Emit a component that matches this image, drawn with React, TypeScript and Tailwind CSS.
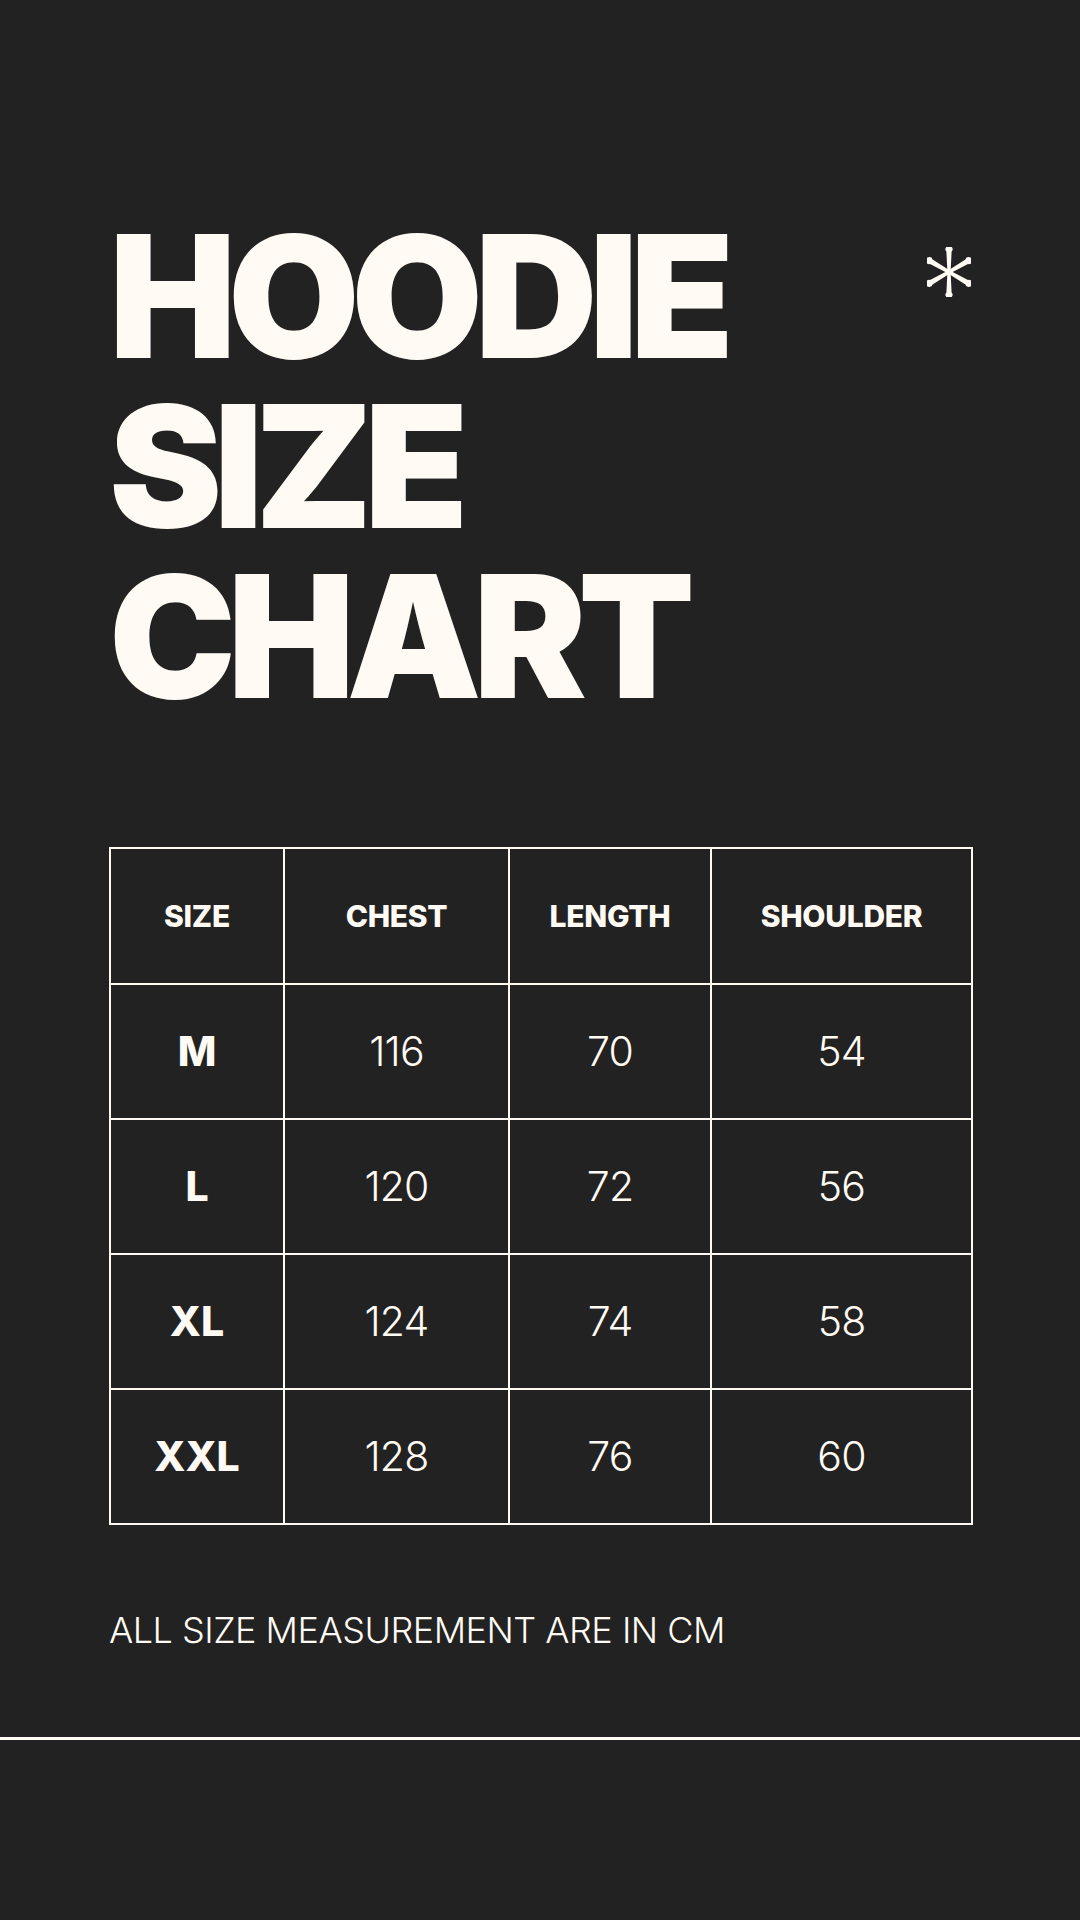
import React from "react";

const rows = [
  ["M", "116", "70", "54"],
  ["L", "120", "72", "56"],
  ["XL", "124", "74", "58"],
  ["XXL", "128", "76", "60"],
];

function Asterisk() {
  const angles = [0, 60, 120, 180, 240, 300];
  return (
    <svg width="44" height="50" viewBox="-22 -25 44 50" className="mt-[36px] shrink-0">
      {angles.map((a) => (
        <path
          key={a}
          transform={`rotate(${a})`}
          d="M -1.6 0 L -2.6 -20.4 A 3.5 3.5 0 1 1 2.6 -20.4 L 1.6 0 Z"
          fill="#fffaf3"
        />
      ))}
      <circle cx="0" cy="0" r="2.6" fill="#fffaf3" />
    </svg>
  );
}

export default function App() {
  return (
    <div className="w-[1080px] h-[1920px] bg-[#222222] text-[#fffaf3] font-['Inter',sans-serif] flex flex-col overflow-hidden">
      <div className="px-[109px] pt-[211px] flex justify-between items-start">
        <h1 className="text-[170px] leading-[170px] font-black tracking-[-0.05em]">
          <div>HOODIE</div>
          <div>SIZE</div>
          <div>CHART</div>
        </h1>
        <Asterisk />
      </div>

      <div className="px-[109px] mt-[126px]">
        <table className="border-collapse border-2 border-[#fffaf3] w-[862px] table-fixed">
          <colgroup>
            <col className="w-[174px]" />
            <col className="w-[225px]" />
            <col className="w-[202px]" />
            <col className="w-[261px]" />
          </colgroup>
          <thead>
            <tr className="h-[136px]">
              {["SIZE", "CHEST", "LENGTH", "SHOULDER"].map((h) => (
                <th key={h} className="border-2 border-[#fffaf3] text-[30px] font-extrabold tracking-[-0.01em] text-center align-middle p-0">
                  {h}
                </th>
              ))}
            </tr>
          </thead>
          <tbody>
            {rows.map((r) => (
              <tr key={r[0]} className="h-[135px]">
                {r.map((c, i) => (
                  <td
                    key={i}
                    className={
                      i === 0
                        ? "border-2 border-[#fffaf3] text-[41px] font-extrabold text-center align-middle p-0"
                        : "border-2 border-[#fffaf3] text-[41px] font-light tracking-[-0.02em] text-center align-middle p-0"
                    }
                  >
                    {c}
                  </td>
                ))}
              </tr>
            ))}
          </tbody>
        </table>
      </div>

      <p className="px-[109px] mt-[87px] text-[36px] leading-[36px] font-light tracking-[-0.014em]">ALL SIZE MEASUREMENT ARE IN CM</p>

      <div className="mt-[89px] h-[3px] w-full bg-[#fffaf3]" />
    </div>
  );
}
